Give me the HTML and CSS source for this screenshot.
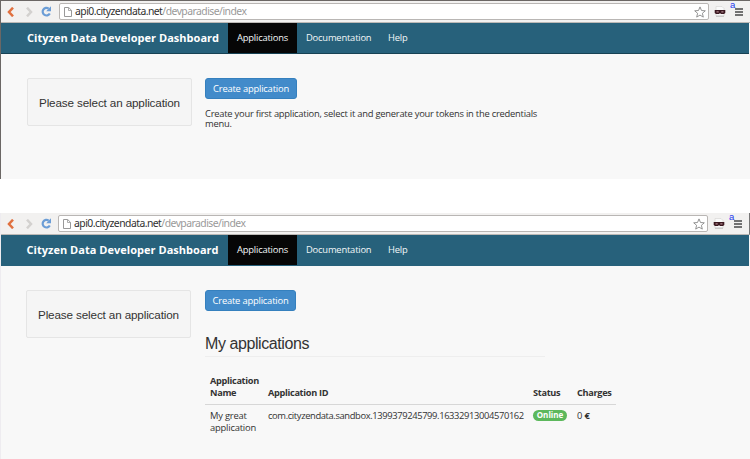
FILE: index.html
```html
<!DOCTYPE html>
<html lang="en">
<head>
<meta charset="utf-8">
<title>Cityzen Data Developer Dashboard</title>
<link rel="stylesheet" href="styles.css">
</head>
<body>
<svg class="defs" width="0" height="0">
  <defs>
    <symbol id="back" viewBox="0 0 8 10"><path d="M6 .7 2 5l4 4.3" fill="none" stroke="#e0703f" stroke-width="2.5"/></symbol>
    <symbol id="forward" viewBox="0 0 8 10"><path d="m2 .7 4 4.3-4 4.3" fill="none" stroke="#d3d1cf" stroke-width="2.5"/></symbol>
    <symbol id="reload" viewBox="0 0 11 11"><path d="M7.7 2.6A3.8 3.8 0 1 0 8.8 7.5" fill="none" stroke="#6b9dd6" stroke-width="2.2"/><path d="M10 .3v5H5.2z" fill="#6b9dd6"/></symbol>
    <symbol id="file" viewBox="0 0 8 10"><path d="M.5.5h4.2l2.8 2.8v6.2h-7z" fill="#fff" stroke="#999"/><path d="M4.5.5v3h3" fill="none" stroke="#999" stroke-width=".8"/></symbol>
    <symbol id="star" viewBox="0 0 12 12"><path d="m6 .9 1.5 3.6 3.8.3-2.9 2.5.9 3.8L6 9.1l-3.3 2 .9-3.8L.7 4.8l3.8-.3z" fill="#fff" stroke="#888" stroke-width=".9"/></symbol>
    <symbol id="mask" viewBox="0 0 12 11"><path d="M2 .5h6l2 2V10H2z" fill="#fafafa" stroke="#d5d3d1" stroke-width=".6"/><path d="M.7 4h10.6v3L10 8H7.2L6 7.2 4.8 8H2L.7 7z" fill="#3b1820"/><path d="M2.5 5.9h2.2M7.3 5.9h2.2" stroke="#c9a0a6" stroke-width="1"/><path d="M2 10.2h8" stroke="#aaa" stroke-width=".7"/></symbol>
    <symbol id="menu" viewBox="0 0 8 8"><path d="M0 1h8M0 4h8M0 7h8" stroke="#484848" stroke-width="1.4"/></symbol>
  </defs>
</svg>

<section class="window first">
  <div class="toolbar">
    <svg class="back"><use href="#back"/></svg>
    <svg class="forward"><use href="#forward"/></svg>
    <svg class="reload"><use href="#reload"/></svg>
    <div class="address">
      <svg class="file"><use href="#file"/></svg>
      <span class="url">api0.cityzendata.net<span class="path">/devparadise/index</span></span>
      <svg class="star"><use href="#star"/></svg>
    </div>
    <svg class="mask"><use href="#mask"/></svg>
    <div class="menu"><svg><use href="#menu"/></svg><span class="badge">a</span></div>
  </div>
  <nav class="navbar">
    <span class="brand">Cityzen Data Developer Dashboard</span>
    <a class="tab active">Applications</a><a class="tab docs">Documentation</a><a class="tab help">Help</a>
  </nav>
  <main class="content">
    <aside class="well">Please select an application</aside>
    <div class="main">
      <button class="create">Create application</button>
      <p class="intro">Create your first application, select it and generate your tokens in the credentials<br>menu.</p>
    </div>
  </main>
</section>

<section class="window second">
  <div class="toolbar">
    <svg class="back"><use href="#back"/></svg>
    <svg class="forward"><use href="#forward"/></svg>
    <svg class="reload"><use href="#reload"/></svg>
    <div class="address">
      <svg class="file"><use href="#file"/></svg>
      <span class="url">api0.cityzendata.net<span class="path">/devparadise/index</span></span>
      <svg class="star"><use href="#star"/></svg>
    </div>
    <svg class="mask"><use href="#mask"/></svg>
    <div class="menu"><svg><use href="#menu"/></svg><span class="badge">a</span></div>
  </div>
  <nav class="navbar">
    <span class="brand">Cityzen Data Developer Dashboard</span>
    <a class="tab active">Applications</a><a class="tab docs">Documentation</a><a class="tab help">Help</a>
  </nav>
  <main class="content">
    <aside class="well">Please select an application</aside>
    <div class="main">
      <button class="create">Create application</button>
      <h2>My applications</h2>
      <table>
        <thead><tr><th class="name">Application<br>Name</th><th class="id">Application ID</th><th class="status">Status</th><th class="charges">Charges</th></tr></thead>
        <tbody><tr><td>My great<br>application</td><td class="appid">com.cityzendata.sandbox.1399379245799.16332913004570162</td><td><span class="online">Online</span></td><td>0 <b>€</b></td></tr></tbody>
      </table>
    </div>
  </main>
</section>
</body>
</html>
```
FILE: styles.css
```css
* { box-sizing: border-box; }
body { margin: 0; width: 750px; height: 459px; overflow: hidden; background: #fff; font: 9.4px/12px "Open Sans", "Noto Sans", sans-serif; letter-spacing: -.2px; color: #333; }
.defs { display: block; height: 0; }
svg { display: block; flex: none; }
.window { background: #f8f8f8; }
.first { height: 179px; border-left: 1px solid #6b6765; border-top: 1px solid #6b6765; margin-bottom: 34px; }
.second { height: 246px; border-left: 1px solid #eeecf0; }
.toolbar { display: flex; align-items: center; height: 22px; background: #f2f1f0; border-bottom: 1px solid #bcb9b6; }
.back { width: 8px; height: 10px; margin-left: 6px; }
.forward { width: 8px; height: 10px; margin-left: 10px; }
.reload { width: 11px; height: 11px; margin-left: 8px; }
.address { display: flex; align-items: center; width: 650px; height: 17px; margin-left: 7px; padding: 0 2px 0 4px; background: #fff; border: 1px solid #b9b6b4; border-radius: 2px; }
.file { width: 8px; height: 10px; }
.url { flex: 1; margin-left: 3px; font: 10.4px/15px "Noto Sans", sans-serif; letter-spacing: -.54px; color: #303030; white-space: nowrap; }
.path { color: #999; }
.star { width: 12px; height: 12px; }
.mask { width: 12px; height: 11px; margin-left: 5px; }
.menu { position: relative; margin-left: 9px; }
.menu svg { width: 8px; height: 8px; }
.badge { position: absolute; left: -5px; top: -8px; color: #2438ee; font: 9.5px/10px "Liberation Sans", sans-serif; letter-spacing: 0; }
.navbar { display: flex; height: 31px; margin-right: 1px; background: #27617b; border-bottom: 1px solid #174254; line-height: 29px; color: #fff; }
.brand { width: 227px; padding-left: 26px; font-size: 11px; font-weight: 700; letter-spacing: .03px; white-space: nowrap; }
.tab { padding: 0 9px; color: #f2f7f8; white-space: nowrap; }
.active { width: 69px; background: #060606; }
.docs { width: 82px; }
.content { display: flex; padding: 24px 0 0 26px; }
.well { width: 165px; height: 48px; border: 1px solid #e5e5e5; border-radius: 2px; background: #f5f5f5; padding: 0 11px; font: 11.7px/47px "Liberation Sans", sans-serif; letter-spacing: -.14px; white-space: nowrap; }
.main { margin-left: 13px; }
.create { display: block; width: 92px; height: 21px; padding: 0; border: 1px solid #3580be; border-radius: 3px; background: #428bca; color: #fff; font: 9.4px/18px "Open Sans", sans-serif; letter-spacing: -.2px; }
.intro { margin: 10px 0 0; line-height: 10px; letter-spacing: -.24px; white-space: nowrap; }
.second .toolbar { border-right: 1px solid #777; }
.second .address { margin-left: 6px; }
.second .brand { padding-left: 25.5px; }
.second .navbar { border-bottom-color: #27617b; }
.second .content { padding-left: 25px; }
.second .main { margin-left: 14px; }
.second .create { width: 91px; }
h2 { width: 340px; height: 24px; margin: 22px 0 17px; border-bottom: 1px solid #eee; font: 16px/22px "Liberation Sans", sans-serif; letter-spacing: -.42px; white-space: nowrap; }
table { width: 411px; table-layout: fixed; border-collapse: collapse; }
th, td { padding: 0 5px; text-align: left; white-space: nowrap; }
th { height: 30px; padding-bottom: 5px; vertical-align: bottom; border-bottom: 1px solid #d7d7d7; font-size: 9.2px; letter-spacing: -.32px; }
td { padding-top: 5px; vertical-align: top; }
.appid { letter-spacing: -.38px; }
.name { width: 58px; }
.id { width: 265px; }
.status { width: 44px; }
.charges { width: 44px; }
.online { display: block; width: 34px; height: 11px; border-radius: 6px; background: #5cb85c; color: #fff; font: bold 8px/10px "Open Sans", sans-serif; letter-spacing: 0; text-align: center; }
```
